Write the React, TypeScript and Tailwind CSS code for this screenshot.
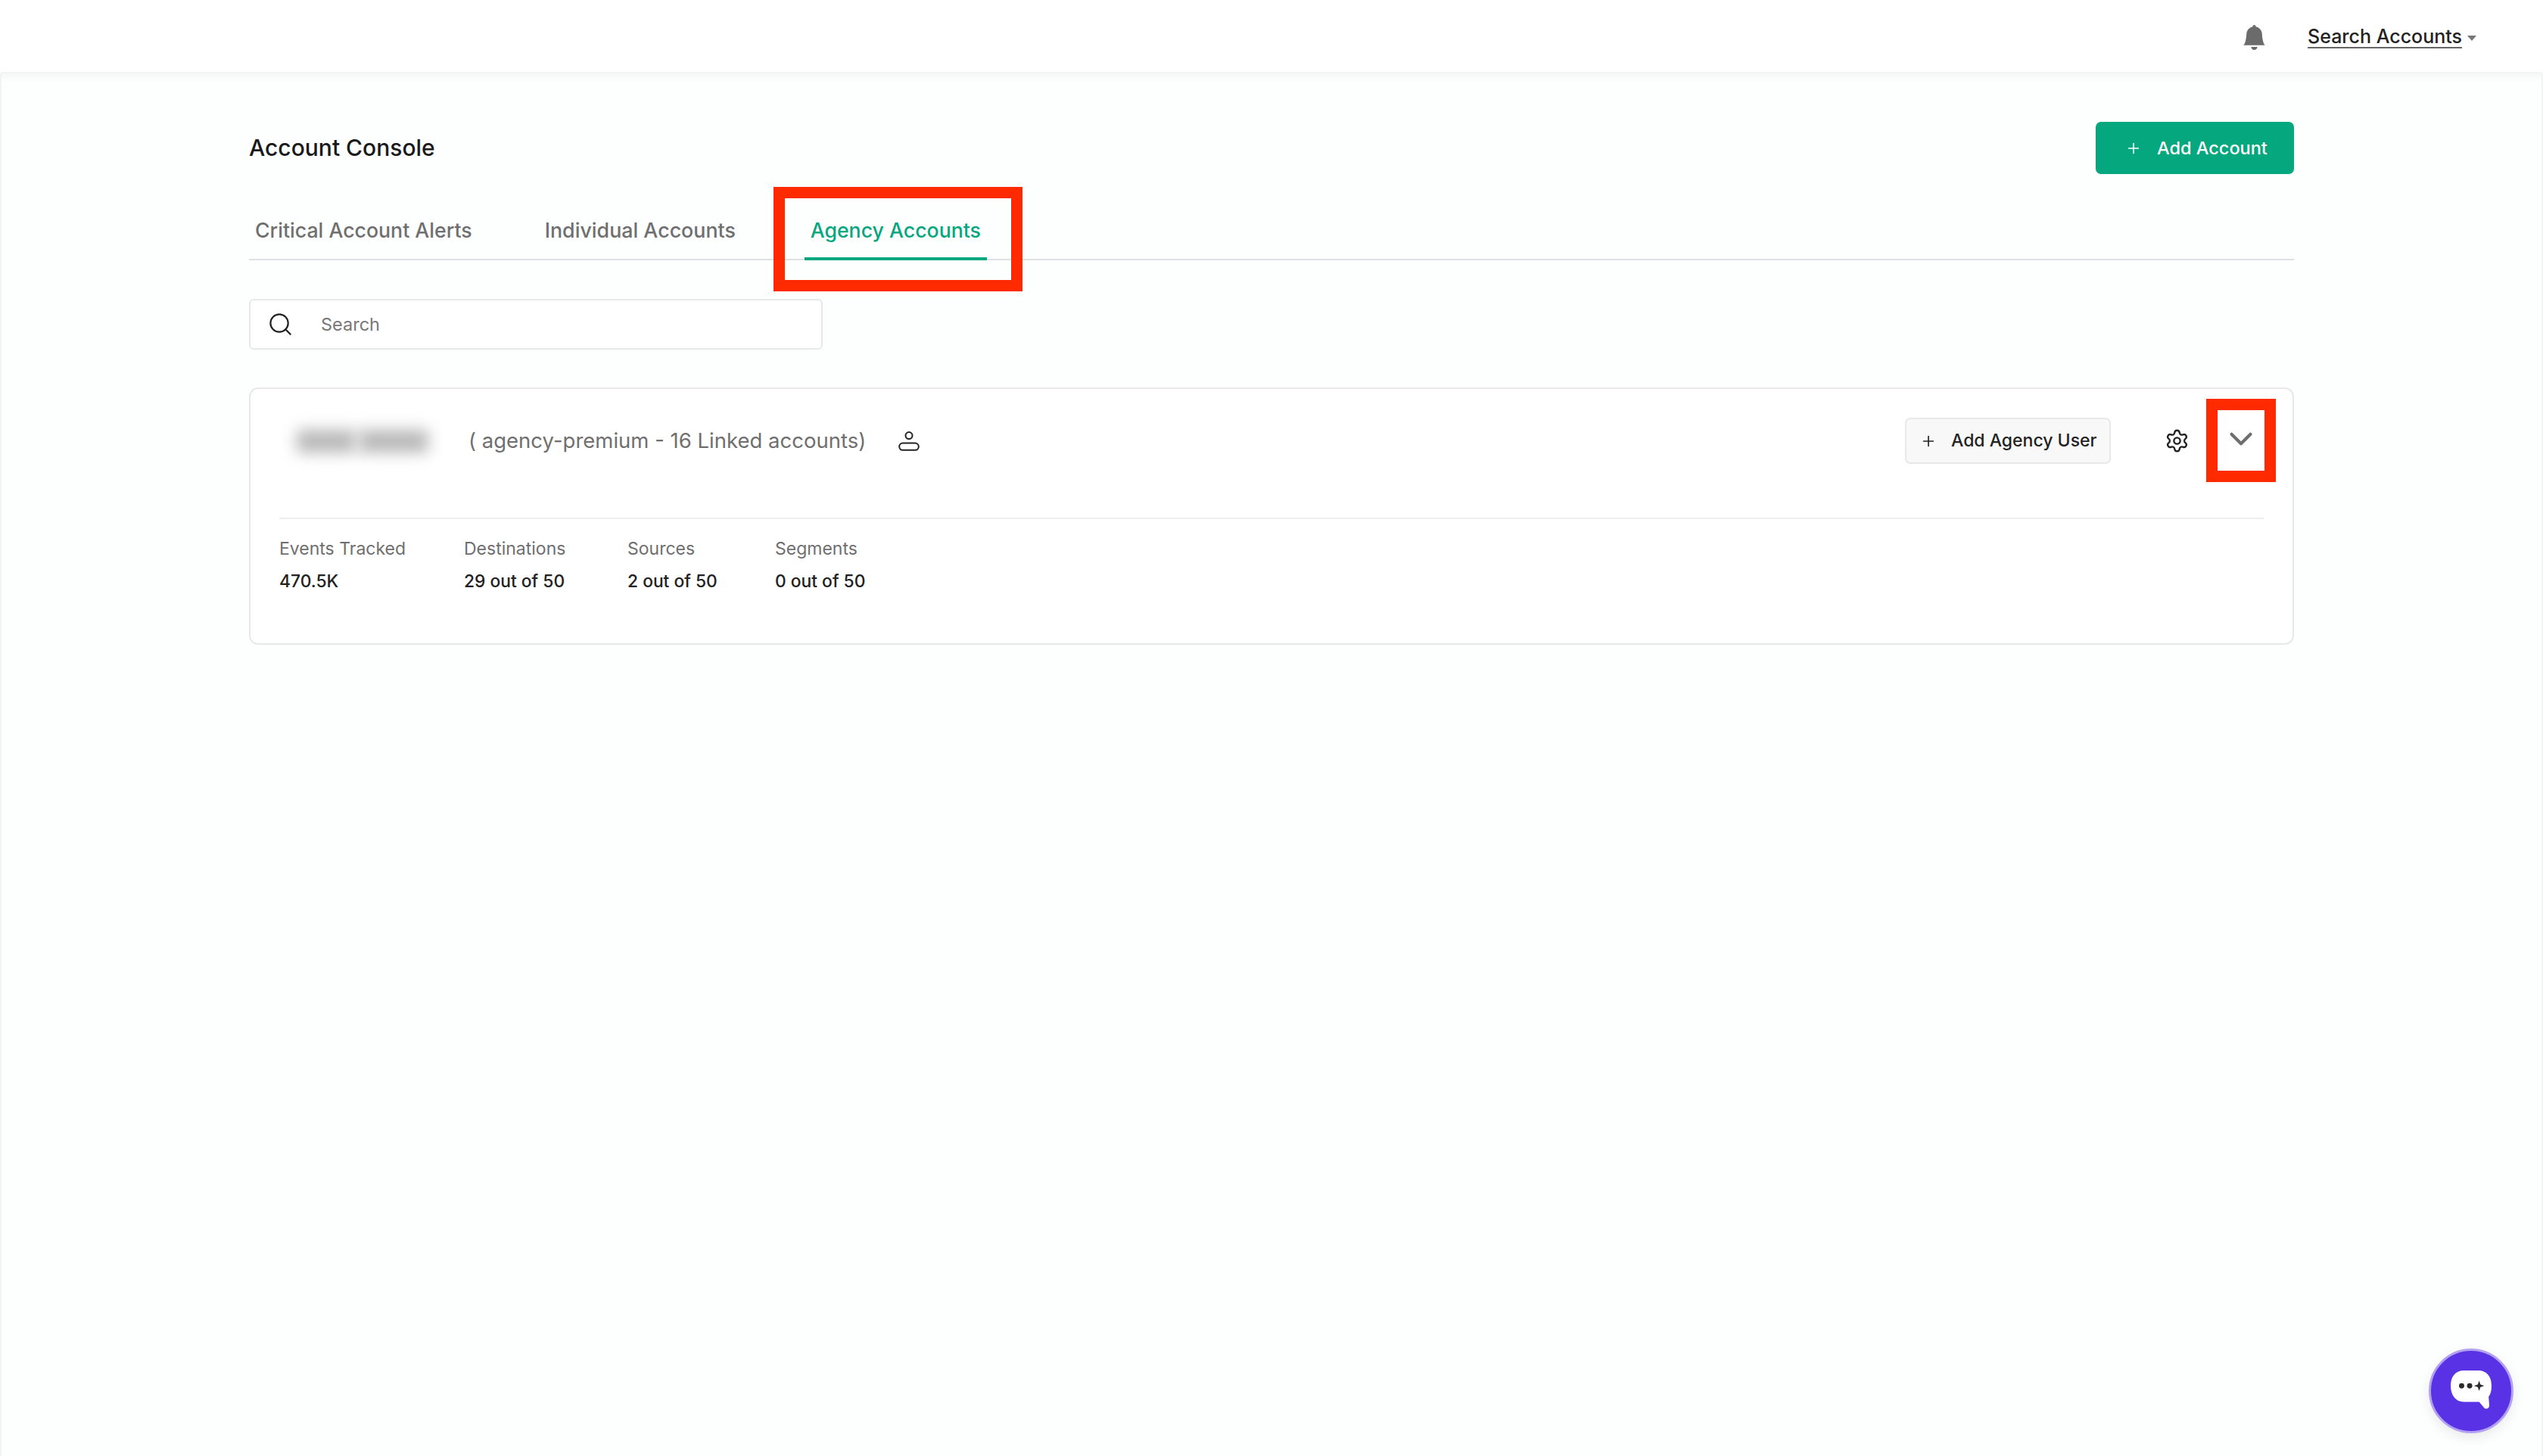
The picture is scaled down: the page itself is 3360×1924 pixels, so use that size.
import { ChevronDown, Plus, Search, Settings } from "lucide-react";
import { BsBellFill } from "react-icons/bs";

const stats = [
  { label: "Events Tracked", value: "470.5K" },
  { label: "Destinations", value: "29 out of 50" },
  { label: "Sources", value: "2 out of 50" },
  { label: "Segments", value: "0 out of 50" },
];

const ChatIcon = () => (
  <svg viewBox="0 0 110 110" className="w-[106px] h-[106px] shrink-0">
    <path d="M45 27h20c11 0 18 8 18 21 0 6-1 11-4 15l1 12c0 5-6 6-8 2l-6-7H45c-11 0-18-9-18-22s7-21 18-21z" fill="#fff" />
    <circle cx="42" cy="48" r="3.6" fill="#2b2b2b" />
    <circle cx="53" cy="48" r="3.6" fill="#2b2b2b" />
    <path d="M66 41l1.8 5.2L73 48l-5.2 1.8L66 55l-1.8-5.2L59 48l5.2-1.8z" fill="#2b2b2b" />
  </svg>
);

const PersonIcon = () => (
  <svg viewBox="0 0 28 26" className="w-[28px] h-[26px]" fill="none" stroke="#222" strokeWidth="2">
    <circle cx="14" cy="5.6" r="4.5" />
    <rect x="1.2" y="15.5" width="25.6" height="9.3" rx="4.6" />
  </svg>
);

export default function App() {
  return (
    <div className="relative h-[1924px] overflow-hidden bg-white font-['Inter',sans-serif]">
      <header className="h-[95px] flex items-center justify-end pr-[88px] bg-white">
        <BsBellFill className="w-[33px] h-[33px] text-[#6b6b6b] mr-[54px] mt-[3px]" />
        <span className="mt-[3px] text-[25px] font-medium text-[#222] underline underline-offset-[5px] decoration-[#666] decoration-2">
          Search Accounts
        </span>
        <span className="ml-[7px] mt-[5px] w-0 h-0 border-x-[6px] border-x-transparent border-t-[7px] border-t-[#777]" />
      </header>

      <main className="h-[1829px] bg-[#fdfefe] border-x-2 border-t-2 border-[#f2f3f3] rounded-t-[4px] shadow-[inset_0_12px_12px_-8px_rgba(0,0,0,0.04)] pl-[327px] pr-[327px] pt-[64px]">
        <div className="flex items-center justify-between h-[69px]">
          <h1 className="text-[30px] font-medium text-[#1a1a1a]">Account Console</h1>
          <button className="flex items-center w-[262px] h-[69px] pl-[39px] rounded-[7px] bg-[#05a77e] text-white text-[23.5px] font-medium">
            <Plus className="w-[22px] h-[22px] mr-[20px]" strokeWidth={1.8} />
            Add Account
          </button>
        </div>

        <nav className="flex gap-[80px] border-b-2 border-[#dfe2e4] h-[114px] items-end">
          <div className="px-[8px] pb-[18px] text-[26.7px] font-medium text-[#6f6f6f]">Critical Account Alerts</div>
          <div className="w-[271px] px-[8px] pb-[18px] text-[26.8px] font-medium text-[#6f6f6f] whitespace-nowrap">Individual Accounts</div>
          <div className="px-[8px] pb-[16px] text-[26.7px] font-medium text-[#05a77e] border-b-4 border-[#05a77e] -mb-[2px]">
            Agency Accounts
          </div>
        </nav>

        <div className="mt-[51px] w-[758px] h-[67px] flex items-center pl-[22px] bg-white border-2 border-[#e6e8ea] rounded-[6px]">
          <Search className="w-[35px] h-[35px] text-[#222]" strokeWidth={1.5} />
          <span className="ml-[36px] text-[23.5px] text-[#777]">Search</span>
        </div>

        <section className="mt-[50px] h-[340px] bg-white border-2 border-[#e6e8ea] rounded-[12px] px-[38px]">
          <div className="flex items-center pt-[38px] pb-[71px] border-b-2 border-[#eceeef]">
            <div className="ml-[23px] w-[78px] h-[30px] rounded bg-[#b8b8b8] blur-[10px]" />
            <div className="ml-[4px] w-[92px] h-[30px] rounded bg-[#b8b8b8] blur-[10px]" />
            <span className="ml-[53px] text-[27.5px] text-[#6f6f6f]">( agency-premium - 16 Linked accounts)</span>
            <span className="ml-[43px]"><PersonIcon /></span>
            <button className="ml-auto flex items-center w-[272px] h-[61px] pl-[18px] bg-[#f8f8f8] border-2 border-[#e8e8e8] rounded-[7px] text-[23px] font-medium text-[#222]">
              <Plus className="w-[22px] h-[22px] mr-[19px]" strokeWidth={1.8} />
              Add Agency User
            </button>
            <Settings className="ml-[71px] w-[33px] h-[33px] text-[#222]" strokeWidth={1.7} />
            <ChevronDown className="ml-[43px] mr-[5px] w-[50px] h-[50px] text-[#6e6e6e] -translate-y-[3px]" strokeWidth={2} />
          </div>
          <div className="grid grid-cols-[244px_216px_195px_auto] mt-[24px]">
            {stats.map((s) => (
              <div key={s.label}>
                <div className="text-[23px] leading-[30px] text-[#6f6f6f]">{s.label}</div>
                <div className="mt-[13px] text-[22.8px] leading-[30px] font-medium text-[#222]">{s.value}</div>
              </div>
            ))}
          </div>
        </section>
      </main>

      {/* annotation boxes */}
      <div className="absolute left-[1022px] top-[247px] w-[329px] h-[138px] border-[15px] border-[#ff2a00]" />
      <div className="absolute left-[2915px] top-[527px] w-[92px] h-[110px] border-[15px] border-[#ff2a00]" />

      <button className="absolute left-[3209px] top-[1782px] w-[112px] h-[112px] flex items-center justify-center rounded-full bg-[#5a32e6] border-[3px] border-[#b3a2f2] shadow-[0_6px_16px_rgba(0,0,0,0.08)]">
        <ChatIcon />
      </button>
    </div>
  );
}
